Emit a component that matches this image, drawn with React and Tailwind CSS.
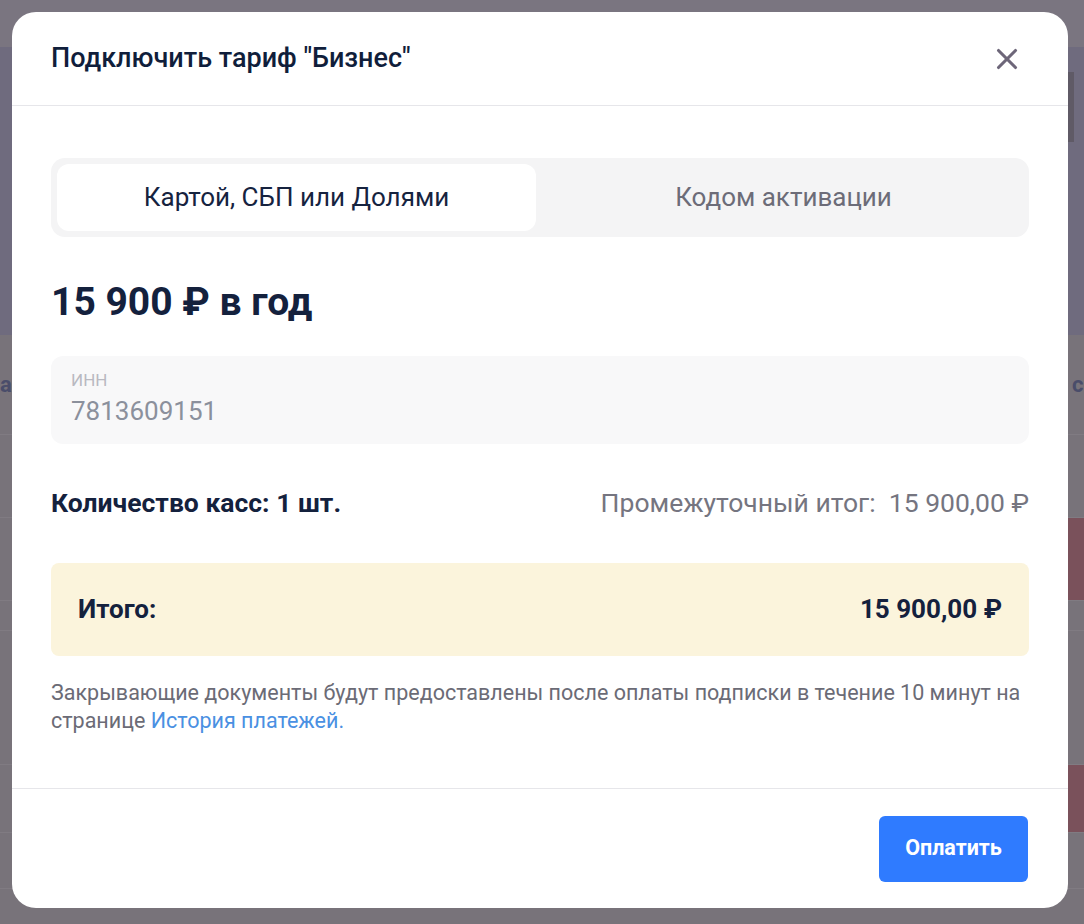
import { X } from "lucide-react";

function Backdrop() {
  return (
    <div className="flex flex-col h-[924px] bg-[#78737a]">
      <div className="h-[47px] bg-[#7a7580]"></div>
      <div className="h-[288px] bg-[#6f6b7e] flex justify-end">
        <div className="w-[6px] h-[70px] mt-[25px] mr-[10px] bg-[#5f5a66]"></div>
      </div>
      <div className="h-[100px] flex items-center justify-between border-b border-[#807b82] text-[22px] font-bold text-[#4a4d6a]">
        <span className="w-[12px] overflow-hidden text-right">ac</span>
        <span className="w-[12px] overflow-hidden">co</span>
      </div>
      <div className="h-[83px] border-b border-[#807b82]"></div>
      <div className="h-[83px] flex justify-end border-b border-[#807b82]">
        <div className="w-[20px] bg-[#7a515b]"></div>
      </div>
      <div className="h-[30px] border-b border-[#807b82]"></div>
      <div className="h-[134px] border-b border-[#807b82]"></div>
      <div className="h-[68px] flex justify-end border-b border-[#807b82]">
        <div className="w-[20px] bg-[#7a515b]"></div>
      </div>
      <div className="h-[56px] border-b border-[#807b82]"></div>
    </div>
  );
}

export default function App() {
  return (
    <div className="relative h-[924px] overflow-hidden" style={{ fontFamily: "Roboto, 'Noto Sans', sans-serif" }}>
      <Backdrop />
      <div className="absolute left-[12px] top-[12px] w-[1056px] h-[896px] bg-white rounded-[24px] flex flex-col">
        <div className="h-[94px] flex items-center justify-between pl-[39px] pr-[44px] border-b border-[#e6e6ea] shrink-0">
          <h2 className="text-[27px] font-medium text-[#101e3b]">Подключить тариф "Бизнес"</h2>
          <X className="w-[34px] h-[34px] text-[#6d6679]" strokeWidth={2.2} />
        </div>

        <div className="flex-1 px-[39px] pt-[52px]">
          <div className="h-[79px] bg-[#f4f4f5] rounded-[14px] p-[6px] flex gap-[8px]">
            <div className="flex-1 bg-white rounded-[12px] flex items-center justify-center text-[26px] text-[#16233f]">
              Картой, СБП или Долями
            </div>
            <div className="flex-1 flex items-center justify-center text-[26px] text-[#6c6c78]">
              Кодом активации
            </div>
          </div>

          <div className="mt-[42px] text-[39px] font-bold text-[#14213d] leading-[46px]">15 900 ₽ в год</div>

          <div className="mt-[31px] h-[88px] bg-[#f8f8f9] rounded-[12px] px-[20px] pt-[14px]">
            <div className="text-[17px] leading-[20px] text-[#b9b9c1]">ИНН</div>
            <div className="mt-[6px] text-[26px] leading-[30px] text-[#8b909c]">7813609151</div>
          </div>

          <div className="mt-[44px] flex items-center justify-between text-[26.5px] leading-[30px]">
            <span className="font-bold text-[#14213d]">Количество касс: 1 шт.</span>
            <span className="text-[#757580]">Промежуточный итог:&nbsp; 15 900,00 ₽</span>
          </div>

          <div className="mt-[45px] h-[93px] bg-[#fbf4dc] rounded-[8px] px-[27px] flex items-center justify-between text-[26px] font-bold text-[#14213d]">
            <span>Итого:</span>
            <span>15 900,00 ₽</span>
          </div>

          <p className="mt-[23px] text-[21.5px] leading-[28px] text-[#6b6b76]">
            Закрывающие документы будут предоставлены после оплаты подписки в течение 10 минут на странице{" "}
            <a className="text-[#4a90e2]">История платежей.</a>
          </p>
        </div>

        <div className="h-[120px] border-t border-[#e6e6ea] flex items-center justify-end pr-[40px] shrink-0">
          <button className="w-[149px] h-[66px] bg-[#2f7bff] rounded-[6px] text-white text-[21.5px] font-bold">
            Оплатить
          </button>
        </div>
      </div>
    </div>
  );
}
